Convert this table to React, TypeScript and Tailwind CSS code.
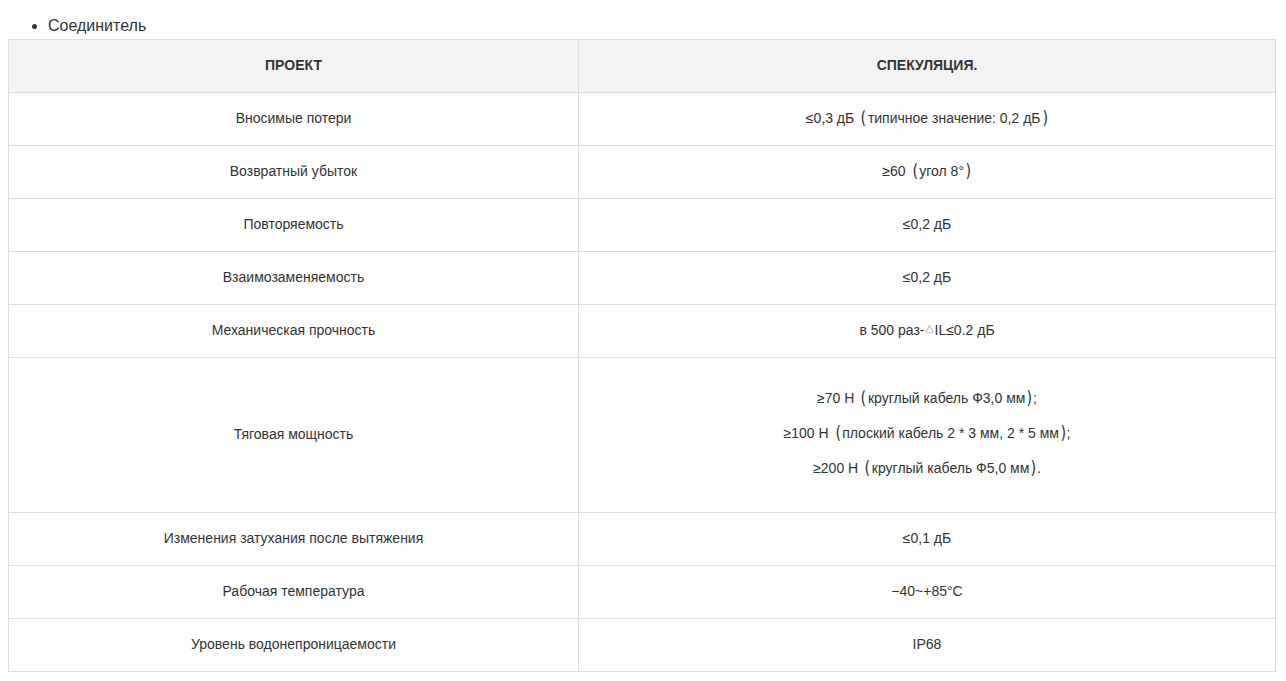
import React from "react";

function Paren({ c }: { c: string }) {
  return (
    <span
      className={`inline-block text-[17px] leading-[14px] text-[#333] ${c === "(" ? "ml-[6px] mr-[1px]" : "ml-[1px]"}`}
      style={{ fontFamily: '"DejaVu Sans", sans-serif', transform: "scaleX(0.85) translateY(1px)" }}
    >
      {c}
    </span>
  );
}

function Rich({ text }: { text: string }) {
  const parts = text.split(/([()△])/);
  return (
    <>
      {parts.map((p, i) => {
        if (p === "(" || p === ")") return <Paren key={i} c={p} />;
        if (p === "△")
          return (
            <span key={i} className="inline-block text-[8px] align-[3px] mx-[1px]">
              △
            </span>
          );
        return <React.Fragment key={i}>{p}</React.Fragment>;
      })}
    </>
  );
}

const rows: { k: string; v: string[]; h?: string }[] = [
  { k: "Вносимые потери", v: ["≤0,3 дБ(типичное значение: 0,2 дБ)"] },
  { k: "Возвратный убыток", v: ["≥60(угол 8°)"] },
  { k: "Повторяемость", v: ["≤0,2 дБ"] },
  { k: "Взаимозаменяемость", v: ["≤0,2 дБ"] },
  { k: "Механическая прочность", v: ["в 500 раз-△IL≤0.2 дБ"] },
  {
    k: "Тяговая мощность",
    v: [
      "≥70 Н(круглый кабель Ф3,0 мм);",
      "≥100 Н(плоский кабель 2 * 3 мм, 2 * 5 мм);",
      "≥200 Н(круглый кабель Ф5,0 мм).",
    ],
    h: "tall",
  },
  { k: "Изменения затухания после вытяжения", v: ["≤0,1 дБ"] },
  { k: "Рабочая температура", v: ["−40~+85°C"] },
  { k: "Уровень водонепроницаемости", v: ["IP68"] },
];

export default function App() {
  return (
    <div
      className="bg-white text-[#333] w-[1286px] h-[681px]"
      style={{ fontFamily: '"Liberation Sans", Arial, "Noto Sans CJK SC", sans-serif' }}
    >
      <ul className="pt-[14px] pl-[48px] list-disc text-[16px] leading-[24px] text-[#333]">
        <li className="pl-0">Соединитель</li>
      </ul>
      <div className="mt-[1px] ml-[8px] w-[1268px] border-l border-t border-[#dddddd] grid grid-cols-[570px_697px]">
        <div className="h-[53px] pb-[2px] bg-[#f3f3f3] border-r border-b border-[#dddddd] flex items-center justify-center text-[14px] font-bold text-[#333]">
          ПРОЕКТ
        </div>
        <div className="h-[53px] pb-[2px] bg-[#f3f3f3] border-r border-b border-[#dddddd] flex items-center justify-center text-[14px] font-bold text-[#333]">
          СПЕКУЛЯЦИЯ.
        </div>
        {rows.map((r) => (
          <React.Fragment key={r.k}>
            <div
              className={`${r.h ? "h-[155px] pb-[2px]" : "h-[53px] pb-[2px]"} border-r border-b border-[#dddddd] flex items-center justify-center text-[14px] text-[#333]`}
            >
              {r.k}
            </div>
            <div
              className={`${r.h ? "h-[155px] pb-[3px]" : "h-[53px] pb-[2px]"} border-r border-b border-[#dddddd] flex flex-col items-center justify-center text-[14px] text-[#333]`}
            >
              {r.v.map((line) => (
                <div key={line} className={r.h ? "leading-[35px]" : "leading-[20px]"}>
                  <Rich text={line} />
                </div>
              ))}
            </div>
          </React.Fragment>
        ))}
      </div>
    </div>
  );
}
